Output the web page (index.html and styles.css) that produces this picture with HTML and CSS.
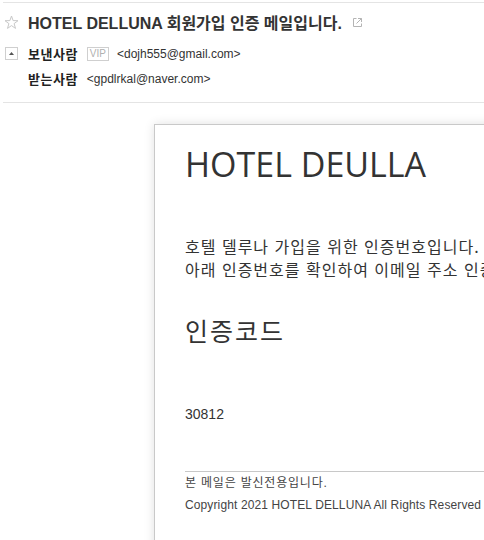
FILE: index.html
```html
<!DOCTYPE html>
<html lang="ko">
<head>
<meta charset="utf-8">
<title>HOTEL DELLUNA 회원가입 인증 메일</title>
<link rel="stylesheet" href="styles.css">
</head>
<body>
<div class="mail">
  <header class="head">
    <div class="subject">
      <svg class="star" width="15" height="15" viewBox="0 0 15 15"><path d="M7.5 1 L9.1 5.6 L14 5.7 L10.1 8.6 L11.5 13.4 L7.5 10.6 L3.5 13.4 L4.9 8.6 L1 5.7 L5.9 5.6 Z" fill="none" stroke="#c8c8c8" stroke-width="1"/></svg>
      <h1 class="title">HOTEL DELLUNA 회원가입 인증 메일입니다.</h1>
      <svg class="ext" width="11" height="11" viewBox="0 0 11 11"><path d="M4.5 1.5 H1.5 V9.5 H9.5 V6.5" fill="none" stroke="#b4b4b4" stroke-width="1"/><path d="M6 1.5 H9.5 V5 M9.5 1.5 L4.5 6.5" fill="none" stroke="#b4b4b4" stroke-width="1"/></svg>
    </div>
    <div class="row">
      <span class="toggle"><svg width="5" height="3" viewBox="0 0 5 3"><path d="M2.5 0 L5 3 H0 Z" fill="#555"/></svg></span>
      <b class="label">보낸사람</b>
      <span class="vip">VIP</span>
      <span class="addr">&lt;dojh555@gmail.com&gt;</span>
    </div>
    <div class="row">
      <span class="toggle blank"></span>
      <b class="label">받는사람</b>
      <span class="addr">&lt;gpdlrkal@naver.com&gt;</span>
    </div>
  </header>
  <main class="content">
    <section class="card">
      <h2 class="brand">HOTEL DEULLA</h2>
      <p class="intro">호텔 델루나 가입을 위한 인증번호입니다.<br>아래 인증번호를 확인하여 이메일 주소 인증을 완료해 주세요.</p>
      <h3 class="code-title">인증코드</h3>
      <p class="code">30812</p>
      <div class="foot">
        <p class="notice">본 메일은 발신전용입니다.</p>
        <p class="copy">Copyright 2021 HOTEL DELLUNA All Rights Reserved</p>
      </div>
    </section>
  </main>
</div>
</body>
</html>
```
FILE: styles.css
```css
html, body {
  margin: 0;
  padding: 0;
  background: #fff;
  overflow: hidden;
  width: 484px;
  height: 540px;
}
body {
  font-family: "Liberation Sans", "Noto Sans CJK KR", sans-serif;
  color: #333;
}
.mail {
  padding-top: 2px;
}
.head {
  border-top: 1px solid #e4e4e4;
  border-bottom: 1px solid #e4e4e4;
  margin-left: 3px;
  padding-bottom: 11px;
}
.subject {
  display: flex;
  align-items: center;
  height: 38px;
  margin-left: -3px;
}
.star {
  margin-left: 4px;
  margin-right: 9px;
}
.title {
  margin: 0;
  font-size: 16px;
  font-weight: bold;
  color: #333;
  font-family: "Liberation Sans", "Noto Sans CJK KR", sans-serif;
}
.ext {
  margin-left: 10px;
}
.row {
  display: flex;
  align-items: center;
  height: 25px;
  font-size: 12px;
}
.toggle {
  width: 11px;
  height: 11px;
  border: 1px solid #cfcfcf;
  display: flex;
  align-items: center;
  justify-content: center;
  margin-left: 2px;
  margin-right: 10px;
}
.toggle.blank {
  border-color: transparent;
}
.label {
  font-weight: bold;
  font-size: 13px;
  letter-spacing: 0.5px;
  color: #222;
  font-family: "Noto Sans CJK KR", sans-serif;
  margin-right: 9px;
}
.vip {
  font-size: 10px;
  color: #b0b0b0;
  border: 1px solid #cfcfcf;
  padding: 0 2px;
  line-height: 12px;
  margin-right: 8px;
}
.addr {
  color: #333;
}
.content {
  padding: 21px 0 0 154px;
}
.card {
  width: 560px;
  height: 500px;
  border: 1px solid #c9c9c9;
  box-shadow: 0 0 10px rgba(0, 0, 0, 0.12);
  padding: 19px 30px 0;
  box-sizing: border-box;
}
.brand {
  margin: 0;
  font-family: "Open Sans", sans-serif;
  font-weight: normal;
  font-size: 34px;
  line-height: 40px;
  color: #333;
}
.intro {
  margin: 51px 0 0;
  font-family: "Noto Sans CJK KR", sans-serif;
  font-size: 16px;
  line-height: 23px;
  letter-spacing: 1px;
  color: #333;
  white-space: nowrap;
}
.code-title {
  margin: 34px 0 0;
  font-family: "Noto Sans CJK KR", sans-serif;
  font-weight: normal;
  font-size: 25px;
  letter-spacing: 2px;
  line-height: 30px;
  color: #333;
}
.code {
  margin: 59px 0 0;
  font-size: 14px;
  line-height: 20px;
}
.foot {
  margin-top: 47px;
  border-top: 1px solid #c8c8c8;
  padding-top: 1px;
}
.foot p {
  margin: 0;
  font-size: 12px;
  color: #444;
  white-space: nowrap;
}
.notice {
  line-height: 21px;
  letter-spacing: 0.8px;
}
.copy {
  line-height: 22px;
  letter-spacing: 0.12px;
}
```
